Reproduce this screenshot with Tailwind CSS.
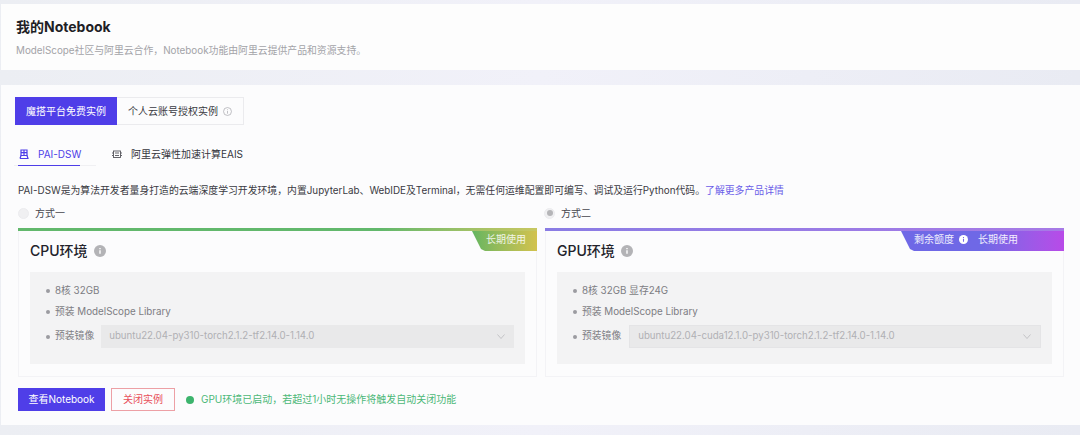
<!DOCTYPE html>
<html lang="zh-CN">
<head>
  <meta charset="UTF-8" />
  <title>我的Notebook</title>
  <script src="https://cdn.jsdelivr.net/npm/@tailwindcss/browser@4"></script>
</head>
<body class="w-[1080px] h-[435px] overflow-hidden bg-gradient-to-r from-[#eceef3] via-[#f1f1f9] to-[#e9ebf3] font-['Inter','Noto_Sans_CJK_SC',sans-serif] text-[#2a2a33]">
  <div class="pt-1 pl-px flex flex-col">
    <!-- Page header -->
    <div class="h-[66px] bg-[#fdfdfd] pl-[15px] pt-[14px]">
      <h1 class="text-[14px] leading-[18px] font-bold text-[#1f1f26]">我的Notebook</h1>
      <p class="mt-[7px] text-[9.85px] leading-[14px] text-[#a3a3a8]">ModelScope社区与阿里云合作，Notebook功能由阿里云提供产品和资源支持。</p>
    </div>

    <!-- Main card -->
    <div class="mt-[15px] h-[340px] bg-[#fcfcfd] pl-[14px] pt-3 relative">
      <!-- Billing tabs -->
      <div class="flex h-7 text-[10px]">
        <div class="w-[102px] bg-[#4f3ee8] text-white flex items-center justify-center">魔搭平台免费实例</div>
        <div class="w-[127px] border border-[#ebebee] border-l-0 flex items-center pl-[11px] text-[#3a3a42]">
          个人云账号授权实例
          <svg class="ml-[5px] w-[9px] h-[9px] text-[#a9a9ae]" viewBox="0 0 10 10" fill="none" stroke="currentColor" stroke-width="0.8"><circle cx="5" cy="5" r="4.4" /><path d="M5 4.4v3M5 2.6v.9" /></svg>
        </div>
      </div>

      <!-- Product tabs -->
      <div class="mt-[15px] flex items-start text-[10px] leading-[14px] h-[27px]">
        <div class="w-[82px] h-[26px] border-b border-[#f0f0f3] -ml-px shrink-0">
          <div class="w-[62px] h-[26px] ml-[4px] border-b border-[#4f3ee8] text-[#4f3ee8] flex items-start pt-[7px] whitespace-nowrap">
            <svg class="w-[10px] h-[11px] shrink-0 mt-[2px] ml-[1px] mr-[9px]" viewBox="0 0 10 11" fill="none" stroke="currentColor" stroke-width="1.2"><path d="M2 1h6v5.5H2zM5 1v5.5M2 3.7h6M1 9.5h8.5" /><path d="M2 6.5 1 9.5M8 6.5l1 3" /></svg>
            PAI-DSW
          </div>
        </div>
        <div class="ml-[16px] flex items-start pt-[7px] text-[#35353c] whitespace-nowrap">
          <svg class="w-[10px] h-[9px] shrink-0 mt-[3px] mr-[9px] text-[#55555c]" viewBox="0 0 10 9" fill="none" stroke="currentColor" stroke-width="0.9"><rect x="1.5" y="1" width="7" height="6.5" /><path d="M3 3h4M3 5.5h4M0 3h1.5M0 5.5h1.5M8.5 3H10M8.5 5.5H10" /></svg>
          阿里云弹性加速计算EAIS
        </div>
      </div>

      <p class="mt-[16px] ml-[3px] text-[9.85px] leading-[14px] whitespace-nowrap text-[#3a3a42]">PAI-DSW是为算法开发者量身打造的云端深度学习开发环境，内置JupyterLab、WebIDE及Terminal，无需任何运维配置即可编写、调试及运行Python代码。<span class="text-[#6a5ce8]">了解更多产品详情</span></p>

      <!-- Environment options -->
      <div class="mt-[9px] ml-[3px] grid grid-cols-[519px_519px] gap-x-2">
        <div>
          <div class="flex items-center h-[14px] text-[10px] text-[#46464d]">
            <span class="w-[11px] h-[11px] rounded-full bg-[#f0f0f2] border border-[#ececef]"></span>
            <span class="ml-[6px]">方式一</span>
          </div>
          <div class="mt-2 h-[149px] relative border-x border-b border-[#f3f3f6]">
            <div class="h-[3px] -mx-px bg-gradient-to-r from-[#62b86c] from-70% to-[#c8c761]"></div>
            <div class="absolute -right-px top-[3px] w-[65px] h-[20px] bg-gradient-to-r from-[#63b560] to-[#d2c24e] [clip-path:polygon(0_0,100%_0,100%_100%,13px_100%,9px_90%)] text-[10px] leading-[17px] text-white/85 pl-[14px]">长期使用</div>
            <div class="pl-[11px] pt-[11px] pr-[11px]">
              <h2 class="flex items-center text-[14px] leading-[18px] font-medium text-[#22222a]">
                CPU环境
                <svg class="ml-[6px] w-3 h-3" viewBox="0 0 12 12"><circle cx="6" cy="6" r="6" fill="#b3b3b6" /><path d="M6 5.2v3.6M6 3v1.2" stroke="#fff" stroke-width="1.4" /></svg>
              </h2>
              <div class="mt-[12px] h-[92px] bg-[#f3f3f4] pl-4 pr-[11px] pt-[12px] text-[9.8px] text-[#7d7d83]">
                <div class="flex items-center h-[14px]"><span class="w-1 h-1 rounded-full bg-[#9b9ba0] mr-[5px]"></span>8核 32GB</div>
                <div class="mt-[7px] flex items-center h-[14px]"><span class="w-1 h-1 rounded-full bg-[#9b9ba0] mr-[5px]"></span>预装 ModelScope Library</div>
                <div class="mt-[6px] flex items-center h-[23px]">
                  <span class="w-1 h-1 rounded-full bg-[#9b9ba0] mr-[5px]"></span>预装镜像
                  <div class="ml-[7px] flex-1 h-[23px] bg-[#e9e9ea] flex items-center justify-between pl-2 pr-[9px] text-[9.7px] text-[#b0b0b4]">
                    ubuntu22.04-py310-torch2.1.2-tf2.14.0-1.14.0
                    <svg class="w-2 h-[5px]" viewBox="0 0 8 5" fill="none" stroke="#b5b5b8" stroke-width="0.7"><path d="m.5.5 3.5 4 3.5-4" /></svg>
                  </div>
                </div>
              </div>
            </div>
          </div>
        </div>

        <div>
          <div class="flex items-center h-[14px] text-[10px] text-[#46464d] -ml-px">
            <span class="w-[11px] h-[11px] rounded-full bg-[#f0f0f2] border border-[#ececef] flex items-center justify-center"><span class="w-[6px] h-[6px] rounded-full bg-[#b5b5b8]"></span></span>
            <span class="ml-[6px]">方式二</span>
          </div>
          <div class="mt-2 h-[149px] relative border-x border-b border-[#f3f3f6]">
            <div class="h-[3px] -mx-px bg-gradient-to-r from-[#8a7ce4] to-[#a77ae6]"></div>
            <div class="absolute -right-px top-[3px] w-[163px] h-[20px] bg-gradient-to-r from-[#6f68e6] from-50% to-[#b84ae8] [clip-path:polygon(0_0,100%_0,100%_100%,13px_100%,9px_90%)] text-[10px] leading-[17px] text-white/90 pl-[13px] flex items-start">
              剩余额度
              <svg class="ml-[5px] mt-[4px] w-[9px] h-[9px]" viewBox="0 0 10 10"><circle cx="5" cy="5" r="5" fill="#fff" /><path d="M5 4.3v3.2M5 2.2v1.2" stroke="#7a68e6" stroke-width="1.2" /></svg>
              <span class="ml-[10px]">长期使用</span>
            </div>
            <div class="pl-[11px] pt-[11px] pr-[11px]">
              <h2 class="flex items-center text-[14px] leading-[18px] font-medium text-[#22222a]">
                GPU环境
                <svg class="ml-[6px] w-3 h-3" viewBox="0 0 12 12"><circle cx="6" cy="6" r="6" fill="#b3b3b6" /><path d="M6 5.2v3.6M6 3v1.2" stroke="#fff" stroke-width="1.4" /></svg>
              </h2>
              <div class="mt-[12px] h-[92px] bg-[#f3f3f4] pl-4 pr-[11px] pt-[12px] text-[9.8px] text-[#7d7d83]">
                <div class="flex items-center h-[14px]"><span class="w-1 h-1 rounded-full bg-[#9b9ba0] mr-[5px]"></span>8核 32GB 显存24G</div>
                <div class="mt-[7px] flex items-center h-[14px]"><span class="w-1 h-1 rounded-full bg-[#9b9ba0] mr-[5px]"></span>预装 ModelScope Library</div>
                <div class="mt-[6px] flex items-center h-[23px]">
                  <span class="w-1 h-1 rounded-full bg-[#9b9ba0] mr-[5px]"></span>预装镜像
                  <div class="ml-[8px] flex-1 h-[23px] bg-[#e9e9ea] border border-[#e4e4e6] flex items-center justify-between pl-2 pr-[9px] text-[9.7px] text-[#b0b0b4]">
                    ubuntu22.04-cuda12.1.0-py310-torch2.1.2-tf2.14.0-1.14.0
                    <svg class="w-2 h-[5px]" viewBox="0 0 8 5" fill="none" stroke="#b5b5b8" stroke-width="0.7"><path d="m.5.5 3.5 4 3.5-4" /></svg>
                  </div>
                </div>
              </div>
            </div>
          </div>
        </div>
      </div>

      <!-- Actions -->
      <div class="mt-[11px] ml-[3px] flex items-center h-[23px] text-[10px]">
        <button class="w-[87px] h-[23px] bg-[#4f3ee8] text-white">查看Notebook</button>
        <button class="ml-[6px] w-[64px] h-[23px] border border-[#eda0a5] text-[#e8505b]">关闭实例</button>
        <span class="ml-[11px] w-2 h-2 rounded-full bg-[#3db46d]"></span>
        <span class="ml-[7px] text-[#4cb878]">GPU环境已启动，若超过1小时无操作将触发自动关闭功能</span>
      </div>
    </div>
  </div>
</body>
</html>
